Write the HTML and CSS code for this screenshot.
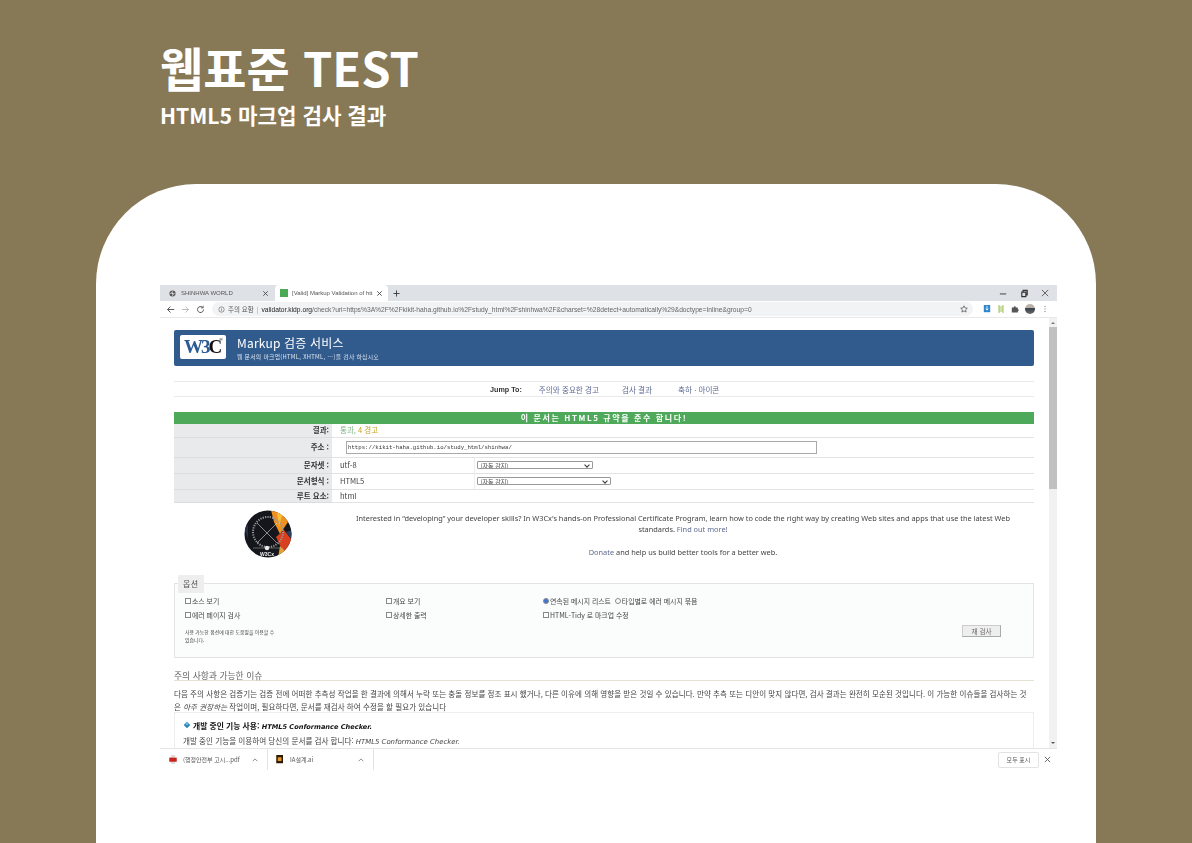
FILE: index.html
```html
<!DOCTYPE html>
<html lang="ko">
  <head>
    <meta charset="UTF-8" />
    <title>웹표준 TEST</title>
    <link rel="stylesheet" href="styles.css">
  </head>
  <body>
    <header class="top">
      <h1>웹표준 TEST</h1>
      <h2>HTML5 마크업 검사 결과</h2>
    </header>
    <main class="panel">
      <div class="browser">
        <div class="tabs">
          <div class="tab">
            <svg class="favicon" viewBox="0 0 16 16"><circle cx="8" cy="8" r="7" fill="#555"/><path d="M2 8h12M8 2v12M4 4l8 8" stroke="#dee1e6" stroke-width="1.4"/></svg>
            <span class="tab-name">SHINHWA WORLD</span>
            <svg class="tab-x" viewBox="0 0 8 8"><path d="M1.500 1.500l5 5M6.500 1.500l-5 5" stroke="#444" stroke-width="1"/></svg>
          </div>
          <div class="tab tab-on">
            <span class="tab-green"></span>
            <span class="tab-name">[Valid] Markup Validation of htt</span>
            <svg class="tab-x" viewBox="0 0 8 8"><path d="M1.500 1.500l5 5M6.500 1.500l-5 5" stroke="#444" stroke-width="1"/></svg>
          </div>
          <svg class="tab-plus" viewBox="0 0 8 8"><path d="M4 .5v7M.5 4h7" stroke="#333" stroke-width="1"/></svg>
          <div class="win">
            <svg viewBox="0 0 10 10"><path d="M1 5.500h7" stroke="#333" stroke-width="1"/></svg>
            <svg viewBox="0 0 10 10"><path d="M2 3.500h4.500v5H2zM3.500 3.500V1.500h4.500v5H6.500" fill="none" stroke="#333" stroke-width="1.300"/></svg>
            <svg viewBox="0 0 10 10"><path d="M1 1l7 7M8 1L1 8" stroke="#555" stroke-width="1"/></svg>
          </div>
        </div>
        <div class="toolbar">
          <svg class="nav" viewBox="0 0 12 12"><path d="M11 6H2M6 2L2 6l4 4" fill="none" stroke="#555" stroke-width="1.300"/></svg>
          <svg class="nav" viewBox="0 0 12 12"><path d="M1 6h9M6 2l4 4-4 4" fill="none" stroke="#bbb" stroke-width="1.300"/></svg>
          <svg class="nav" viewBox="0 0 12 12"><path d="M10 6a4 4 0 1 1-1.200-2.800M9.500 1v2.800H6.700" fill="none" stroke="#555" stroke-width="1.300"/></svg>
          <div class="omnibox">
            <svg class="info" viewBox="0 0 12 12"><circle cx="6" cy="6" r="4.600" fill="none" stroke="#555" stroke-width="1"/><path d="M6 5v3.400M6 3.200v1" stroke="#555" stroke-width="1"/></svg>
            <span class="warn">주의 요함</span>
            <span class="sep">|</span>
            <span class="url"><b>validator.kldp.org</b>/check?uri=https%3A%2F%2Fkikit-haha.github.io%2Fstudy_html%2Fshinhwa%2F&amp;charset=%28detect+automatically%29&amp;doctype=Inline&amp;group=0</span>
            <svg class="star" viewBox="0 0 12 12"><path d="M6 1.200l1.500 3.200 3.500.4-2.600 2.400.7 3.400L6 8.900l-3.100 1.700.7-3.400L1 4.800l3.500-.4z" fill="none" stroke="#444" stroke-width="1"/></svg>
          </div>
          <div class="exts">
            <svg viewBox="0 0 10 10"><rect width="8" height="9" x="1" fill="#2f86c9"/><path d="M5 1v5M3.500 4.500L5 6.500l1.500-2" stroke="#fff" fill="none"/></svg>
            <svg viewBox="0 0 10 10"><path d="M2.500 0v10M7.500 0v10M2.500 2.500h5M2.500 5h5M2.500 7.500h5" stroke="#a4c65e" stroke-width="1.300"/></svg>
            <svg viewBox="0 0 10 10"><path d="M1 3h2.400a1.300 1.300 0 0 1 2.600 0H8.500v2.400a1.200 1.200 0 0 1 0 2.400V9.500H1z" fill="#555"/></svg>
            <span class="avatar"></span>
            <svg viewBox="0 0 10 10"><path d="M5 1.200v1M5 4.500v1M5 7.800v1" stroke="#444" stroke-width="1.200"/></svg>
          </div>
        </div>
        <div class="view">
          <div class="page">
            <div class="banner">
              <div class="w3c"><span class="w3">W3</span><span class="c">C</span><span class="reg">®</span></div>
              <div>
                <div class="banner-title">Markup 검증 서비스</div>
                <div class="banner-sub">웹 문서의 마크업(HTML, XHTML, …)을 검사 하십시오</div>
              </div>
            </div>
            <nav class="jump">
              <b>Jump To:</b>
              <a>주의와 중요한 경고</a>
              <a>검사 결과</a>
              <a>축하 · 아이콘</a>
            </nav>
            <div class="verdict">이 문서는 HTML5 규약을 준수 합니다!</div>
            <table class="result">
              <colgroup><col class="col-label"><col class="col-val"><col></colgroup>
              <tr class="r1"><th>결과:</th><td colspan="2"><span class="pass">통과,</span> <span class="warns">4 경고</span></td></tr>
              <tr class="r2"><th>주소 :</th><td colspan="2"><span class="uri">https://kikit-haha.github.io/study_html/shinhwa/</span></td></tr>
              <tr class="r3"><th>문자셋 :</th><td class="val">utf-8</td><td><span class="sel sel-a">(자동 감지)</span></td></tr>
              <tr class="r3"><th>문서형식 :</th><td class="val">HTML5</td><td><span class="sel sel-b">(자동 감지)</span></td></tr>
              <tr class="r4"><th>루트 요소:</th><td colspan="2">html</td></tr>
            </table>
            <div class="promo">
              <svg class="badge" viewBox="0 0 48 48">
                <defs><clipPath id="disc"><circle cx="24" cy="24" r="23.500"/></clipPath></defs>
                <g clip-path="url(#disc)">
                  <rect width="48" height="48" fill="#14161c"/>
                  <path d="M27 0H40L44 12L36 24L30 12z" fill="#f0901e"/>
                  <path d="M33 2l5 3-3 12z" fill="#f6c23c"/>
                  <path d="M32 27L40 20L48 30V40L40 44z" fill="#d8401f"/>
                  <path d="M42 22l6-2v10z" fill="#27415f"/>
                  <path d="M36 36l6 6-8 6z" fill="#e8a12c"/>
                  <path d="M0 18l4-3v14z" fill="#25324c"/>
                  <path d="M6 40l6 6-6 2z" fill="#b5391f"/>
                  <path d="M13 13L33 33M33 13L13 33" stroke="#d8d8d8" stroke-width=".6"/>
                  <circle cx="24" cy="22" r="15" fill="none" stroke="#999" stroke-width="2" stroke-dasharray="1.200 1.200"/>
                  <path d="M9 38h30" stroke="#999" stroke-width=".6"/>
                  <circle cx="23" cy="38" r="2.200" fill="#eee"/>
                </g>
                <text x="23" y="45.500" class="badge-text">W3Cx</text>
              </svg>
              <div class="promo-text">
                <p>Interested in “developing” your developer skills? In W3Cx's hands-on Professional Certificate Program, learn how to code the right way by creating Web sites and apps that use the latest Web standards. <a>Find out more!</a></p>
                <p class="donate"><a>Donate</a> and help us build better tools for a better web.</p>
              </div>
            </div>
            <fieldset class="options">
              <legend>옵션</legend>
              <div class="opt-grid">
                <label><i class="box"></i>소스 보기</label>
                <label><i class="box"></i>개요 보기</label>
                <label><i class="radio radio-on"></i>연속된 메시지 리스트 <i class="radio"></i>타입별로 에러 메시지 묶음</label>
                <label><i class="box"></i>에러 페이지 검사</label>
                <label><i class="box"></i>상세한 출력</label>
                <label><i class="box"></i>HTML-Tidy 로 마크업 수정</label>
              </div>
              <div class="opt-foot">
                <p class="help">사용 가능한 옵션에 대한 도움말을 이용할 수 있습니다.</p>
                <span class="revalidate">재 검사</span>
              </div>
            </fieldset>
            <h3 class="notes-title">주의 사항과 가능한 이슈</h3>
            <p class="notes">다음 주의 사항은 검증기는 검증 전에 어떠한 추측성 작업을 한 결과에 의해서 누락 또는 충돌 정보를 정조 표시 했거나, 다른 이유에 의해 영향을 받은 것일 수 있습니다. 만약 추측 또는 디안이 맞지 않다면, 검사 결과는 완전히 모순된 것입니다. 이 가능한 이슈들을 검사하는 것은 <em>아주 권장하는</em> 작업이며, 필요하다면, 문서를 재검사 하여 수정을 할 필요가 있습니다</p>
            <div class="note-box">
              <p class="note-head">
                <svg class="gem" viewBox="0 0 12 12"><path d="M6 1l5 5-5 5-5-5z" fill="#2a86b8"/><path d="M6 1l2 5H4zM1 6h10" fill="#7cc4e6"/></svg>
                <b>개발 중인 기능 사용: <em>HTML5 Conformance Checker.</em></b>
              </p>
              <p class="note-body">개발 중인 기능을 이용하여 당신의 문서를 검사 합니다: <em>HTML5 Conformance Checker.</em></p>
            </div>
          </div>
          <div class="scroll">
            <span class="arrow-up"></span>
            <span class="thumb"></span>
            <span class="arrow-down"></span>
          </div>
        </div>
        <div class="downloads">
          <div class="dl dl-a">
            <svg viewBox="0 0 10 12"><path d="M2 0h6v12H2z" fill="#ddd"/><rect y="3.500" width="10" height="5.500" fill="#c9241c"/></svg>
            <span class="dl-name">(행정안전부 고시...pdf</span>
            <svg class="chev" viewBox="0 0 8 5"><path d="M1 4l3-3 3 3" fill="none" stroke="#666" stroke-width="1"/></svg>
          </div>
          <div class="dl dl-b">
            <svg viewBox="0 0 10 12"><rect width="9" height="11" fill="#2c1a05"/><rect x="2" y="3" width="5" height="5" fill="#e9962b"/></svg>
            <span class="dl-name">IA설계.ai</span>
            <svg class="chev" viewBox="0 0 8 5"><path d="M1 4l3-3 3 3" fill="none" stroke="#666" stroke-width="1"/></svg>
          </div>
          <span class="show-all">모두 표시</span>
          <svg class="dl-x" viewBox="0 0 8 8"><path d="M1 1l6 6M7 1L1 7" stroke="#555" stroke-width="1"/></svg>
        </div>
      </div>
    </main>
  </body>
</html>
```

FILE: styles.css
```css
* {
  box-sizing: border-box;
}
html,
body {
  margin: 0;
  height: 843px;
  overflow: hidden;
}
body {
  background-color: #877856;
  font-family: "Noto Sans CJK KR", "Noto Sans", sans-serif;
  color: #333;
}
p {
  margin: 0;
}
.top {
  height: 184px;
  padding: 34px 0 0 160px;
  color: #fff;
}
.top h1 {
  margin: 0;
  font-size: 47px;
  line-height: 66px;
  font-weight: 700;
}
.top h2 {
  margin: 0;
  font-size: 21.200px;
  line-height: 29px;
  font-weight: 700;
}
.panel {
  height: 659px;
  margin: 0 96px;
  padding: 101px 39px 0 64px;
  background-color: #fff;
  border-radius: 100px 100px 0 0;
}

/* browser chrome */
.browser {
  width: 897px;
  height: 485px;
  display: flex;
  flex-direction: column;
  overflow: hidden;
  filter: blur(0.4px);
}
.tabs {
  height: 16px;
  flex: none;
  display: flex;
  align-items: center;
  background-color: #dee1e6;
  font-size: 6px;
  color: #555;
}
.tab {
  width: 115px;
  height: 16px;
  padding: 0 6px 0 9px;
  display: flex;
  align-items: center;
  gap: 5px;
}
.tab-on {
  width: 113px;
  background-color: #fff;
  border-radius: 4px 4px 0 0;
  padding: 0 5px 0 5px;
  gap: 4px;
}
.tab-name {
  flex: 1;
  min-width: 0;
  font-family: "Liberation Sans", sans-serif;
  font-size: 6px;
  white-space: nowrap;
}
.favicon {
  width: 7px;
  height: 7px;
  flex: none;
}
.tab-green {
  width: 8px;
  height: 8px;
  flex: none;
  background-color: #4caa57;
}
.tab-x {
  width: 7px;
  height: 7px;
  flex: none;
}
.tab-plus {
  width: 7px;
  height: 7px;
  margin-left: 5px;
}
.win {
  margin-left: auto;
  padding-right: 7px;
  display: flex;
  gap: 12px;
}
.win svg {
  width: 9px;
  height: 9px;
}
.toolbar {
  height: 17px;
  flex: none;
  padding: 1px 8px 1px 6px;
  display: flex;
  align-items: center;
  gap: 6px;
  background-color: #fff;
  border-bottom: 1px solid #e8e8e8;
}
.nav {
  width: 9px;
  height: 9px;
  flex: none;
}
.omnibox {
  width: 782px;
  height: 14px;
  margin-left: 1px;
  padding: 0 5px 0 6px;
  display: flex;
  align-items: center;
  gap: 3px;
  background-color: #f1f3f4;
  border-radius: 7px;
  font-size: 6.500px;
  color: #666;
  white-space: nowrap;
}
.info {
  width: 7px;
  height: 7px;
}
.warn {
  color: #555;
}
.sep {
  color: #999;
}
.url b {
  font-weight: 400;
  color: #222;
}
.url {
  font-family: "Liberation Sans", sans-serif;
  font-size: 6.700px;
}
.star {
  width: 8px;
  height: 8px;
  margin-left: auto;
}
.exts {
  display: flex;
  align-items: center;
  gap: 6px;
  margin-left: 4px;
}
.exts svg {
  width: 8px;
  height: 8px;
}
.avatar {
  width: 10px;
  height: 10px;
  border-radius: 50%;
  background: linear-gradient(#b9b2a8 40%, #3a3f4c 45%, #6d6a68);
}

/* validator page */
.view {
  height: 430px;
  flex: none;
  display: flex;
  overflow: hidden;
  background-color: #fff;
}
.page {
  width: 889px;
  flex: none;
  padding: 12px 15px 0 14px;
  font-size: 7.500px;
  color: #444;
}
.scroll {
  width: 8px;
  position: relative;
  background-color: #f1f1f1;
}
.thumb {
  display: block;
  height: 162px;
  margin-top: 9px;
  background-color: #c1c1c1;
}
.arrow-up,
.arrow-down {
  position: absolute;
  left: 2px;
  border: 2px solid transparent;
}
.arrow-up {
  top: 2px;
  border-bottom-color: #777;
}
.arrow-down {
  bottom: 2px;
  border-top-color: #555;
}
.banner {
  height: 36px;
  padding: 5px 6px;
  display: flex;
  gap: 11px;
  background-color: #315a8d;
  border-radius: 2px;
  color: #fff;
}
.w3c {
  position: relative;
  width: 46px;
  height: 24px;
  padding-left: 4px;
  background-color: #fff;
  border-radius: 2px;
  font-family: "Liberation Serif", serif;
  font-size: 19px;
  font-weight: 700;
  line-height: 24px;
  letter-spacing: -2px;
  white-space: nowrap;
}
.w3 {
  color: #2b5a94;
}
.c {
  color: #111;
}
.reg {
  position: absolute;
  top: -7px;
  right: 3px;
  font-size: 5px;
  letter-spacing: 0;
  color: #111;
}
.banner-title {
  font-size: 12px;
  line-height: 15px;
  letter-spacing: 0.200px;
}
.banner-sub {
  margin-top: 2px;
  font-size: 5.800px;
  line-height: 9px;
  letter-spacing: 0.300px;
  color: #dbe4ef;
}
.jump {
  height: 16px;
  margin: 15px 0;
  padding-left: 316px;
  display: flex;
  align-items: center;
  gap: 17px;
  border-top: 1px solid #eaeaea;
  border-bottom: 1px solid #eaeaea;
  font-size: 7.600px;
  color: #5f6a92;
}
.jump b {
  font-family: "Liberation Sans", sans-serif;
  font-size: 7.200px;
  color: #333;
}
.jump a:nth-of-type(2) {
  margin-left: 6px;
}
.jump a:nth-of-type(3) {
  margin-left: 9px;
}
.verdict {
  height: 12px;
  background-color: #4ea95a;
  color: #fff;
  font-size: 8px;
  line-height: 12px;
  font-weight: 700;
  letter-spacing: 1.600px;
  text-align: center;
}
.result {
  width: 860px;
  border-collapse: collapse;
  table-layout: fixed;
}
.col-label {
  width: 158px;
}
.col-val {
  width: 142px;
}
.result th {
  padding: 0 3px 0 0;
  background-color: #e9eaeb;
  border-bottom: 1px solid #ddd;
  text-align: right;
  font-weight: 700;
  font-size: 7.500px;
  line-height: 10px;
  color: #333;
}
.result td {
  padding: 0 0 0 8px;
  border-bottom: 1px solid #e3e3e3;
  line-height: 10px;
}
.result td.val {
  border-right: 1px solid #eee;
}
.r1 {
  height: 13px;
}
.r2 {
  height: 20px;
}
.r3 {
  height: 16px;
}
.r4 {
  height: 13px;
}
.pass {
  color: #7eb585;
}
.warns {
  color: #c9a227;
}
.uri {
  display: block;
  width: 471px;
  height: 13px;
  margin-left: 6px;
  padding-left: 1px;
  border: 1px solid #aaa;
  font-family: "Liberation Mono", monospace;
  font-size: 5.700px;
  line-height: 11px;
  color: #333;
}
.sel {
  display: block;
  position: relative;
  height: 8px;
  margin-left: -6px;
  padding-left: 3px;
  border: 1px solid #999;
  border-radius: 1px;
  font-size: 6px;
  line-height: 7px;
  overflow: hidden;
}
.sel::after {
  content: "";
  position: absolute;
  right: 3px;
  top: 1px;
  width: 3px;
  height: 3px;
  border-right: 1px solid #333;
  border-bottom: 1px solid #333;
  transform: rotate(45deg);
}
.sel-a {
  width: 116px;
}
.sel-b {
  width: 134px;
}
.promo {
  height: 72px;
  display: flex;
  padding-top: 7px;
}
.badge {
  width: 48px;
  height: 48px;
  flex: none;
  margin-left: 70px;
}
.badge-text {
  font-family: "Liberation Sans", sans-serif;
  font-size: 5px;
  font-weight: 700;
  fill: #eee;
  text-anchor: middle;
}
.promo-text {
  width: 670px;
  margin: 3px 0 0 56px;
  font-family: "Noto Sans", sans-serif;
  font-size: 7.380px;
  line-height: 11px;
  text-align: center;
  color: #444;
}
.promo-text a {
  color: #5f6a92;
}
.donate {
  margin-top: 12px;
}
.options {
  height: 83px;
  margin: 0;
  padding: 0 0 0 10px;
  border: 1px solid #e3e3e3;
  background-color: #fbfdfc;
  font-size: 6.900px;
}
.options legend {
  height: 18px;
  padding: 0 5px;
  margin-left: -7px;
  background-color: #eee;
  font-size: 8px;
  line-height: 18px;
  letter-spacing: 0.400px;
  color: #555;
}
.opt-grid {
  display: grid;
  grid-template-columns: 201px 157px 1fr;
  grid-auto-rows: 14px;
  margin-top: 1px;
  align-items: center;
}
.opt-grid label {
  display: flex;
  align-items: center;
  gap: 1px;
  white-space: pre;
}
.box,
.radio {
  width: 6px;
  height: 6px;
  flex: none;
  border: 1px solid #888;
  background-color: #fff;
}
.radio {
  border-radius: 50%;
  margin-left: 1px;
}
.radio-on {
  background-color: #3a78d4;
  margin-left: 0;
}
.opt-foot {
  display: flex;
  justify-content: space-between;
  align-items: flex-start;
  padding: 3px 32px 0 0;
}
.help {
  width: 93px;
  font-size: 4.900px;
  line-height: 8px;
  margin-top: 3px;
  word-break: keep-all;
}
.revalidate {
  width: 39px;
  height: 12px;
  background-color: #eee;
  border: 1px solid #ccc;
  border-right-color: #aaa;
  border-bottom-color: #aaa;
  text-align: center;
  font-size: 6.500px;
  line-height: 10px;
  color: #666;
}
.notes-title {
  margin: 12px 0 6px;
  height: 11px;
  border-bottom: 1px solid #e4e1d2;
  font-size: 8.800px;
  line-height: 11px;
  font-weight: 400;
  color: #666;
}
.notes {
  margin-right: 3px;
  font-size: 7.500px;
  line-height: 13px;
  letter-spacing: 0.070px;
}
.note-box {
  height: 60px;
  margin-top: -1px;
  padding: 7px 8px;
  border: 1px solid #eee;
}
.note-head {
  display: flex;
  align-items: center;
  gap: 2px;
  color: #111;
  font-size: 7.800px;
}
.gem {
  width: 8px;
  height: 8px;
}
.note-body {
  margin-top: 4px;
  font-size: 7.600px;
}
.note-box em {
  font-family: "DejaVu Sans", sans-serif;
  font-size: 6.900px;
}
.note-head em {
  font-size: 6.600px;
}

/* downloads */
.downloads {
  height: 22px;
  flex: none;
  display: flex;
  align-items: center;
  padding-left: 9px;
  background-color: #fff;
  border-top: 1px solid #e5e5e5;
  font-size: 6px;
  color: #555;
}
.downloads svg {
  width: 8px;
  height: 9px;
  flex: none;
}
.dl {
  display: flex;
  align-items: center;
  height: 21px;
  border-right: 1px solid #e3e3e3;
}
.dl-a {
  width: 99px;
}
.dl-b {
  width: 106px;
  padding-left: 8px;
}
.dl-name {
  margin-left: 6px;
  flex: 1;
}
.downloads .chev {
  width: 6px;
  height: 4px;
  margin-right: 9px;
}
.show-all {
  width: 41px;
  height: 16px;
  margin-left: auto;
  border: 1px solid #e3e3e3;
  border-radius: 2px;
  text-align: center;
  line-height: 14px;
}
.downloads .dl-x {
  width: 7px;
  height: 7px;
  margin: 0 6px 0 5px;
}
```
